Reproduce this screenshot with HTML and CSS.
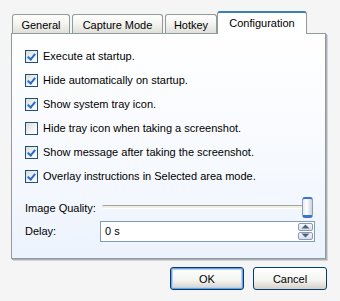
FILE: index.html
```html
<!DOCTYPE html>
<html lang="en">
<head>
    <meta charset="UTF-8">
    <title>Options</title>
    <link rel="stylesheet" href="styles.css">
</head>
<body>
    <div class="dialog">
        <!-- Pestañas -->
        <div class="tabs">
            <div class="tab tab-general">General</div>
            <div class="tab tab-capture">Capture Mode</div>
            <div class="tab tab-hotkey">Hotkey</div>
            <div class="tab tab-config active">Configuration</div>
        </div>

        <div class="panel">
            <label class="check-row"><span class="box checked"></span>Execute at startup.</label>
            <label class="check-row"><span class="box checked"></span>Hide automatically on startup.</label>
            <label class="check-row"><span class="box checked"></span>Show system tray icon.</label>
            <label class="check-row"><span class="box"></span>Hide tray icon when taking a screenshot.</label>
            <label class="check-row"><span class="box checked"></span>Show message after taking the screenshot.</label>
            <label class="check-row"><span class="box checked"></span>Overlay instructions in Selected area mode.</label>

            <div class="field-row quality">
                <span class="field-label">Image Quality:</span>
                <div class="slider">
                    <div class="track"></div>
                    <div class="thumb"></div>
                </div>
            </div>

            <div class="field-row">
                <span class="field-label">Delay:</span>
                <div class="spin-input">
                    <span class="value">0 s</span>
                    <div class="spin">
                        <div class="spin-btn up">
                            <svg width="9" height="5" viewBox="0 0 9 5"><path d="M0.5 4.5 L4.5 0.5 L8.5 4.5 Z" fill="#4d6185"/></svg>
                        </div>
                        <div class="spin-btn down">
                            <svg width="9" height="5" viewBox="0 0 9 5"><path d="M0.5 0.5 L4.5 4.5 L8.5 0.5 Z" fill="#4d6185"/></svg>
                        </div>
                    </div>
                </div>
            </div>
        </div>

        <div class="buttons">
            <button class="btn default">OK</button>
            <button class="btn">Cancel</button>
        </div>
    </div>
</body>
</html>
```

FILE: styles.css
```css
body {
    margin: 0;
    background-color: #f5f5f5;
    font-family: 'Liberation Sans', Arial, sans-serif;
    font-size: 11px;
    color: #000000;
}

.dialog {
    padding: 11px 0 0 11px;
}

/* Pestañas */
.tabs {
    display: flex;
    align-items: flex-end;
    height: 22px;
    padding-left: 1px;
    position: relative;
    z-index: 1;
}

.tab {
    box-sizing: border-box;
    height: 19px;
    margin-right: 2px;
    border: 1px solid #919b9c;
    border-bottom: none;
    border-radius: 3px 3px 0 0;
    background: linear-gradient(#ffffff, #f3f3ef 50%, #e0e0da);
    display: flex;
    align-items: center;
    justify-content: center;
    padding-top: 1px;
}

.tab-general { width: 58px; }
.tab-capture { width: 91px; }
.tab-hotkey { width: 52px; margin-right: 0; }

.tab.active {
    width: 90px;
    height: 23px;
    margin-bottom: -1px;
    background: #ffffff;
    border-top: 2px solid #3c7fb1;
    padding-top: 0;
    padding-bottom: 2px;
}

.panel {
    box-sizing: border-box;
    width: 315px;
    height: 226px;
    border: 1px solid #919b9c;
    background: linear-gradient(#ffffff, #f6f9fe 60%, #ecf3fd);
    box-shadow: 1px 1px 0 #a9b0b8, 2px 2px 0 #d2d4d6;
    padding: 10px 0 0 13px;
}

.check-row {
    display: flex;
    align-items: center;
    height: 24px;
    gap: 5px;
}

.box {
    box-sizing: border-box;
    width: 13px;
    height: 13px;
    border: 1px solid #1c5180;
    background: linear-gradient(135deg, #dcdcd5, #f7f7f5 70%, #ffffff);
    position: relative;
}

.box.checked::after {
    content: '';
    position: absolute;
    left: 3px;
    top: 1px;
    width: 3px;
    height: 6px;
    border: solid #2668d6;
    border-width: 0 2px 2px 0;
    transform: rotate(40deg);
}

.field-row {
    display: flex;
    align-items: center;
    height: 26px;
}

.quality {
    margin-top: 9px;
    height: 21px;
}

.field-label {
    width: 75px;
}

.slider {
    position: relative;
    width: 214px;
    height: 21px;
}

.track {
    position: absolute;
    left: 2px;
    right: 4px;
    top: 8px;
    height: 2px;
    border-top: 1px solid #a3a3a3;
    border-bottom: 1px solid #ffffff;
    background: #f1efe2;
    border-radius: 2px;
}

.thumb {
    position: absolute;
    right: 1px;
    top: 0;
    box-sizing: border-box;
    width: 11px;
    height: 21px;
    border: 1px solid #8d9db8;
    border-top: 2px solid #3a74cf;
    border-bottom: 3px solid #3a74cf;
    border-radius: 3px;
    background: linear-gradient(90deg, #e4e8ef, #ffffff 40%, #c9d1de);
}

.spin-input {
    box-sizing: border-box;
    width: 215px;
    height: 21px;
    border: 1px solid #7f9db9;
    background: #ffffff;
    display: flex;
    align-items: center;
    justify-content: space-between;
    padding: 0 1px 0 4px;
}

.spin {
    display: flex;
    flex-direction: column;
    gap: 1px;
}

.spin-btn {
    box-sizing: border-box;
    width: 15px;
    height: 8px;
    border: 1px solid #8a99b4;
    border-radius: 2px;
    background: linear-gradient(#f5f6f8, #d8dde8);
    display: flex;
    align-items: center;
    justify-content: center;
}

/* Botones */
.buttons {
    display: flex;
    justify-content: flex-end;
    gap: 9px;
    width: 316px;
    margin-top: 8px;
}

.btn {
    box-sizing: border-box;
    width: 74px;
    height: 23px;
    border: 1px solid #003c74;
    border-radius: 3px;
    background: linear-gradient(#ffffff, #f3f3ef 60%, #d6d0c5);
    font-family: 'Liberation Sans', Arial, sans-serif;
    font-size: 11px;
    color: #000000;
    padding: 0;
}

.btn.default {
    box-shadow: inset 0 0 0 1px #6f9fe6, inset 0 0 0 2px #b8d0f4;
}
```
